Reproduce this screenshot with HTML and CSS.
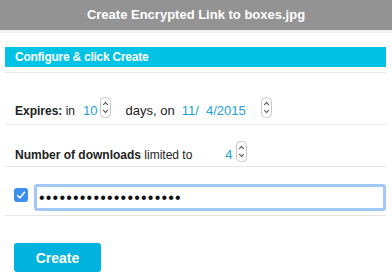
FILE: index.html
```html
<!DOCTYPE html>
<html lang="en">
<head>
    <meta charset="UTF-8">
    <title>Create Encrypted Link</title>
    <link rel="stylesheet" href="styles.css">
</head>
<body>

<div class="titlebar">Create Encrypted Link to boxes.jpg</div>

<div class="panel">
    <div class="section">
        <div class="section-title">Configure &amp; click Create</div>
    </div>

    <div class="row row-expires">
        <b>Expires:</b>&nbsp;in
        <span class="value days">10</span>
        <svg class="spin" width="11" height="21" viewBox="0 0 11 21"><rect x="0.5" y="0.5" width="10" height="20" rx="4" fill="#fff" stroke="#c8c8c8"/><path d="M3.2 8 L5.5 5.5 L7.8 8" fill="none" stroke="#444" stroke-width="1.1"/><path d="M3.2 13 L5.5 15.5 L7.8 13" fill="none" stroke="#444" stroke-width="1.1"/></svg>
        <span class="text-on">days, on</span>
        <span class="value date">11/&nbsp; 4/2015</span>
        <svg class="spin" width="11" height="21" viewBox="0 0 11 21"><rect x="0.5" y="0.5" width="10" height="20" rx="4" fill="#fff" stroke="#c8c8c8"/><path d="M3.2 8 L5.5 5.5 L7.8 8" fill="none" stroke="#444" stroke-width="1.1"/><path d="M3.2 13 L5.5 15.5 L7.8 13" fill="none" stroke="#444" stroke-width="1.1"/></svg>
    </div>

    <div class="row row-downloads">
        <b>Number of downloads</b>&nbsp;limited to
        <span class="value count">4</span>
        <svg class="spin" width="11" height="21" viewBox="0 0 11 21"><rect x="0.5" y="0.5" width="10" height="20" rx="4" fill="#fff" stroke="#c8c8c8"/><path d="M3.2 8 L5.5 5.5 L7.8 8" fill="none" stroke="#444" stroke-width="1.1"/><path d="M3.2 13 L5.5 15.5 L7.8 13" fill="none" stroke="#444" stroke-width="1.1"/></svg>
    </div>

    <div class="row row-password">
        <svg class="check" width="14" height="14" viewBox="0 0 14 14"><rect width="14" height="14" rx="3" fill="#3b8ff0"/><path d="M3.3 7.2 L5.9 9.9 L10.8 3.8" fill="none" stroke="#fff" stroke-width="1.6"/></svg>
        <div class="password">•••••••••••••••••••••</div>
    </div>

    <div class="actions">
        <button class="create">Create</button>
    </div>
</div>

</body>
</html>
```

FILE: styles.css
```css
body {
    margin: 0;
    background-color: #fff;
    font-family: "Liberation Sans", Arial, sans-serif;
    font-size: 12px;
    color: #222;
}
.titlebar {
    height: 30px;
    line-height: 30px;
    background-color: #939393;
    border-bottom: 3px solid #f2f2f2;
    color: #fff;
    font-size: 13px;
    font-weight: bold;
    text-align: center;
}
.panel {
    padding: 0 6px 0 5px;
}
.section {
    padding-top: 14px;
    padding-bottom: 5px;
    border-bottom: 1px solid #e6e6e6;
}
.section-title {
    height: 20px;
    line-height: 20px;
    padding-left: 10px;
    background-color: #00c2e5;
    color: #fff;
    font-size: 12px;
    font-weight: bold;
    letter-spacing: -0.25px;
}
.row {
    display: flex;
    align-items: flex-end;
    padding-left: 10px;
    border-bottom: 1px solid #e6e6e6;
    white-space: nowrap;
    box-sizing: border-box;
}
.row-expires {
    height: 52px;
    padding-bottom: 6px;
}
.row-downloads {
    height: 42px;
    padding-bottom: 4px;
}
.row-password {
    height: 49px;
    padding-left: 9px;
    padding-bottom: 4px;
}
.value {
    color: #1ea1d8;
    font-size: 13px;
}
.days {
    margin-left: 8px;
    margin-right: 2px;
}
.text-on {
    margin-left: 15px;
    font-size: 13px;
}
.date {
    margin-left: 7px;
    margin-right: 15px;
}
.count {
    margin-left: 33px;
    margin-right: 3px;
}
.spin {
    display: block;
}
.check {
    display: block;
    margin-bottom: 9px;
}
.password {
    flex: 1;
    height: 21px;
    line-height: 21px;
    margin-left: 6px;
    padding-left: 2px;
    border: 3px solid #a2c8f6;
    border-radius: 3px;
    color: #111;
    font-size: 16px;
    letter-spacing: 1.2px;
}
.actions {
    padding: 27px 0 0 9px;
}
.create {
    width: 87px;
    height: 29px;
    border: none;
    border-radius: 3px;
    background-color: #00b3de;
    color: #fff;
    font-family: "Liberation Sans", Arial, sans-serif;
    font-size: 14px;
    font-weight: bold;
}
```
